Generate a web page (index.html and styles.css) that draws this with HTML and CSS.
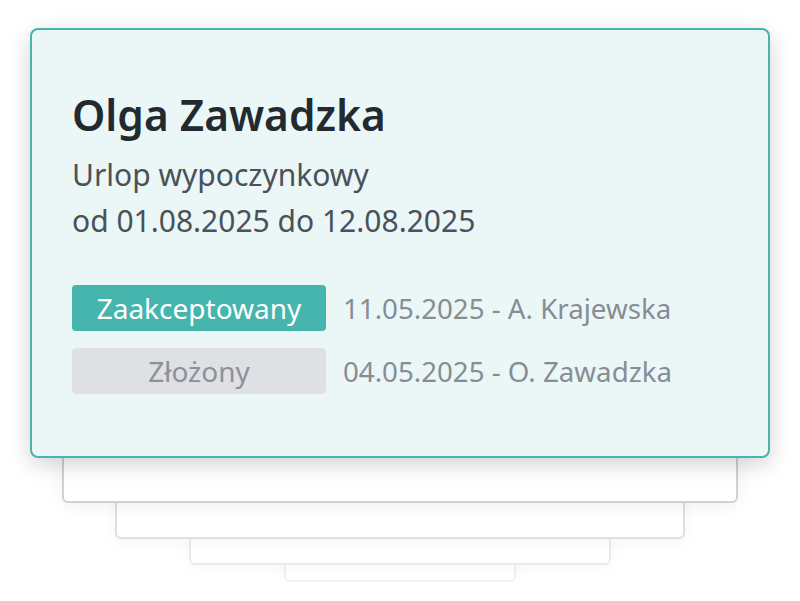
FILE: index.html
```html
<!DOCTYPE html>
<html lang="pl">
<head>
<meta charset="utf-8">
<link rel="stylesheet" href="styles.css">
</head>
<body>
<div class="stage">
  <div class="card">
    <h1 class="name">Olga Zawadzka</h1>
    <p class="line">Urlop wypoczynkowy</p>
    <p class="line">od 01.08.2025 do 12.08.2025</p>
    <div class="history">
      <div class="entry">
        <span class="badge badge-ok">Zaakceptowany</span>
        <span class="meta">11.05.2025 - A. Krajewska</span>
      </div>
      <div class="entry">
        <span class="badge badge-sub">Złożony</span>
        <span class="meta">04.05.2025 - O. Zawadzka</span>
      </div>
    </div>
  </div>
  <div class="back back1"></div>
  <div class="back back2"></div>
  <div class="back back3"></div>
  <div class="back back4"></div>
</div>
</body>
</html>
```

FILE: styles.css
```css
html, body {
  margin: 0;
  padding: 0;
  background: #ffffff;
}
body {
  font-family: "Noto Sans", "Open Sans", sans-serif;
}
.stage {
  display: flex;
  flex-direction: column;
  align-items: center;
  padding-top: 28px;
}
.card {
  position: relative;
  z-index: 5;
  box-sizing: border-box;
  width: 740px;
  height: 430px;
  background: #ebf7f7;
  border: 2px solid #45b5ad;
  border-radius: 8px;
  box-shadow: 0 6px 22px rgba(0, 0, 0, 0.18);
  padding: 61px 40px 0 40px;
}
.name {
  margin: 0 0 13px;
  font-size: 42.4px;
  line-height: 48px;
  font-weight: 600;
  color: #222a2f;
}
.line {
  margin: 0;
  font-size: 30px;
  line-height: 46px;
  color: #4a5158;
}
.history {
  display: flex;
  flex-direction: column;
  gap: 17px;
  margin-top: 41px;
}
.entry {
  display: flex;
  align-items: center;
  gap: 17px;
}
.badge {
  box-sizing: border-box;
  width: 254px;
  height: 46px;
  border-radius: 4px;
  display: flex;
  align-items: center;
  justify-content: center;
  font-size: 28px;
}
.badge-ok {
  background: #45b5ad;
  color: #ffffff;
}
.badge-sub {
  background: #dee0e4;
  color: #8b9198;
}
.meta {
  font-size: 27.7px;
  color: #868d95;
}
.back {
  position: relative;
  box-sizing: border-box;
  background: #ffffff;
  border-radius: 6px;
  border-style: solid;
  border-width: 2px;
}
.back1 {
  z-index: 4;
  width: 676px;
  height: 60px;
  margin-top: -15px;
  border-color: #ccd1d6;
  box-shadow: 0 4px 18px rgba(0, 0, 0, 0.06);
}
.back2 {
  z-index: 3;
  width: 570px;
  height: 50px;
  margin-top: -14px;
  border-color: #dcdfe3;
  box-shadow: 0 4px 16px rgba(0, 0, 0, 0.04);
}
.back3 {
  z-index: 2;
  width: 422px;
  height: 40px;
  margin-top: -14px;
  border-color: #e8eaec;
  box-shadow: 0 4px 14px rgba(0, 0, 0, 0.03);
}
.back4 {
  z-index: 1;
  width: 232px;
  height: 30px;
  margin-top: -13px;
  border-color: #f1f2f3;
  box-shadow: 0 4px 12px rgba(0, 0, 0, 0.02);
}
```
